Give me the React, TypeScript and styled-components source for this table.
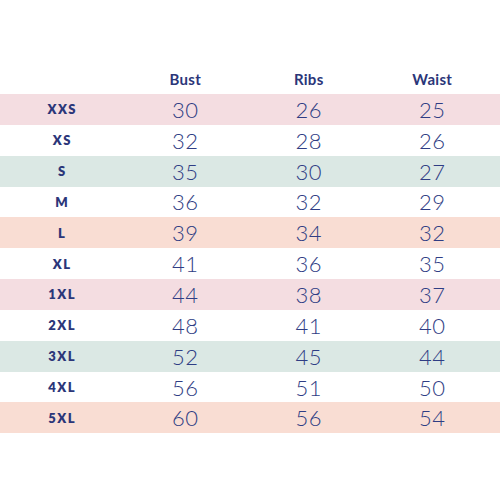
import styled, { createGlobalStyle } from "styled-components";

const GlobalStyle = createGlobalStyle`
  body {
    margin: 0;
    background: #fff;
    font-family: "Lato", "Liberation Sans", sans-serif;
  }
`;

type Tone = "pink" | "green" | "peach" | "none";

const TONES: Record<Tone, string> = {
  pink: "#f4dde1",
  green: "#dbe8e4",
  peach: "#f9ddd3",
  none: "transparent",
};

const rows: { size: string; bust: number; ribs: number; waist: number; tone: Tone }[] = [
  { size: "XXS", bust: 30, ribs: 26, waist: 25, tone: "pink" },
  { size: "XS", bust: 32, ribs: 28, waist: 26, tone: "none" },
  { size: "S", bust: 35, ribs: 30, waist: 27, tone: "green" },
  { size: "M", bust: 36, ribs: 32, waist: 29, tone: "none" },
  { size: "L", bust: 39, ribs: 34, waist: 32, tone: "peach" },
  { size: "XL", bust: 41, ribs: 36, waist: 35, tone: "none" },
  { size: "1XL", bust: 44, ribs: 38, waist: 37, tone: "pink" },
  { size: "2XL", bust: 48, ribs: 41, waist: 40, tone: "none" },
  { size: "3XL", bust: 52, ribs: 45, waist: 44, tone: "green" },
  { size: "4XL", bust: 56, ribs: 51, waist: 50, tone: "none" },
  { size: "5XL", bust: 60, ribs: 56, waist: 54, tone: "peach" },
];

export default function App() {
  return (
    <>
      <GlobalStyle />
      <Page>
        <Header>
          <span />
          <HeadCell>Bust</HeadCell>
          <HeadCell>Ribs</HeadCell>
          <HeadCell>Waist</HeadCell>
        </Header>
        {rows.map((r) => (
          <Row key={r.size} tone={r.tone}>
            <SizeCell>{r.size}</SizeCell>
            <NumCell>{r.bust}</NumCell>
            <NumCell>{r.ribs}</NumCell>
            <NumCell>{r.waist}</NumCell>
          </Row>
        ))}
      </Page>
    </>
  );
}

const Page = styled.div`
  width: 500px;
  height: 500px;
  padding-top: 64px;
  box-sizing: border-box;
  display: flex;
  flex-direction: column;
`;

const columns = `
  display: grid;
  grid-template-columns: repeat(4, 123.5px);
  align-items: center;
  justify-items: center;
`;

const Header = styled.div`
  ${columns}
  height: 30px;
  color: #2b3679;
`;

const HeadCell = styled.span`
  font-family: "Lato", "Liberation Sans", sans-serif;
  font-weight: 700;
  font-size: 15px;
  letter-spacing: 0.3px;
`;

const Row = styled.div<{ tone: Tone }>`
  ${columns}
  height: 30.85px;
  background: ${({ tone }) => TONES[tone]};
`;

const SizeCell = styled.span`
  font-weight: 800;
  font-size: 13px;
  letter-spacing: 1.5px;
  color: #2b3679;
  padding-left: 1px;
`;

const NumCell = styled.span`
  font-family: "Lato", "Liberation Sans", sans-serif;
  font-weight: 300;
  font-size: 22px;
  color: #2f3d84;
  letter-spacing: 0.5px;
`;
